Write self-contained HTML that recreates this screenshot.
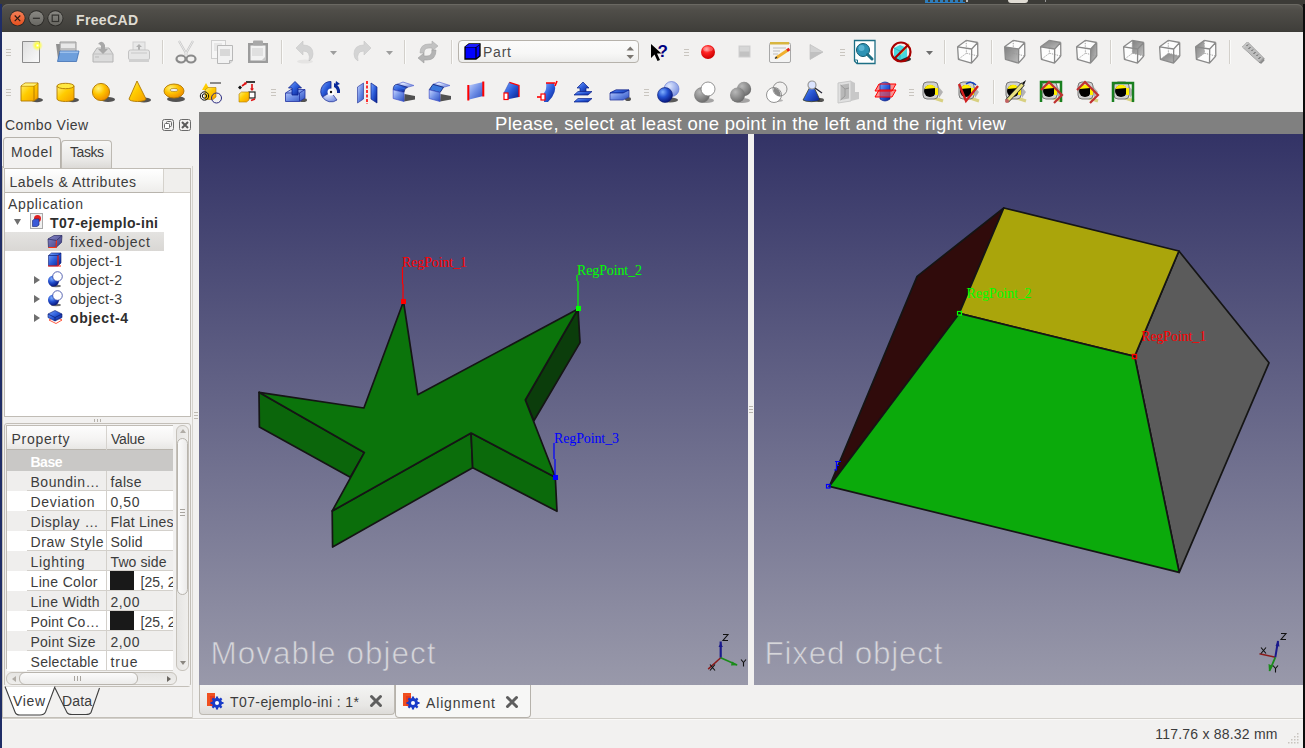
<!DOCTYPE html>
<html><head><meta charset="utf-8">
<style>
*{margin:0;padding:0;box-sizing:border-box}
html,body{width:1305px;height:748px;overflow:hidden;background:#f2f1f0;font-family:"Liberation Sans",sans-serif;position:relative}
.a{position:absolute}
svg.a{overflow:visible}
.t{position:absolute;white-space:nowrap;color:#3c3c3c}
</style></head><body>
<svg width="0" height="0" style="position:absolute"><defs>
<linearGradient id="gclose" x1="0" y1="0" x2="0" y2="1"><stop offset="0" stop-color="#f58058"/><stop offset="1" stop-color="#e5501e"/></linearGradient>
<linearGradient id="gmin" x1="0" y1="0" x2="0" y2="1"><stop offset="0" stop-color="#8a8984"/><stop offset="1" stop-color="#686762"/></linearGradient>
<linearGradient id="gyel" x1="0" y1="0" x2="1" y2="1"><stop offset="0" stop-color="#fff27a"/><stop offset="0.45" stop-color="#ffcc00"/><stop offset="1" stop-color="#f59c00"/></linearGradient>
<linearGradient id="gblu" x1="0" y1="0" x2="1" y2="1"><stop offset="0" stop-color="#c8d6ff"/><stop offset="0.5" stop-color="#6f8fe6"/><stop offset="1" stop-color="#2c4fc0"/></linearGradient>
<linearGradient id="gdblu" x1="0" y1="0" x2="1" y2="1"><stop offset="0" stop-color="#7aa6ff"/><stop offset="0.5" stop-color="#2a5ad8"/><stop offset="1" stop-color="#0a1f8a"/></linearGradient>
<radialGradient id="gsph" cx="35%" cy="30%" r="70%"><stop offset="0" stop-color="#fff27a"/><stop offset="0.5" stop-color="#ffc400"/><stop offset="1" stop-color="#f09000"/></radialGradient>
<radialGradient id="gbsph" cx="35%" cy="30%" r="70%"><stop offset="0" stop-color="#7fb0ff"/><stop offset="0.5" stop-color="#2350d0"/><stop offset="1" stop-color="#0a1a80"/></radialGradient>
<radialGradient id="gbsph2" cx="35%" cy="30%" r="70%"><stop offset="0" stop-color="#dfe8ff"/><stop offset="1" stop-color="#7d93e0"/></radialGradient>
<radialGradient id="ggsph" cx="35%" cy="30%" r="70%"><stop offset="0" stop-color="#b8b8b8"/><stop offset="1" stop-color="#6e6e6e"/></radialGradient>
<linearGradient id="ggray" x1="0" y1="0" x2="1" y2="1"><stop offset="0" stop-color="#f4f4f4"/><stop offset="1" stop-color="#c4c4c4"/></linearGradient>
<linearGradient id="gshade" x1="0" y1="0" x2="1" y2="1"><stop offset="0" stop-color="#808080"/><stop offset="1" stop-color="#bdbdbd"/></linearGradient>
<radialGradient id="gred" cx="40%" cy="30%" r="70%"><stop offset="0" stop-color="#ff8a8a"/><stop offset="0.4" stop-color="#f22"/><stop offset="1" stop-color="#c00"/></radialGradient>
</defs></svg>
<div class="a" style="left:0px;top:0px;width:1305px;height:10px;background:#3c3b37;"></div>
<div class="a" style="left:925px;top:0px;width:40px;height:2px;background:repeating-linear-gradient(90deg,#2f8fd6 0 3px,#3c3b37 3px 5px);opacity:0.8"></div>
<div class="a" style="left:925px;top:2px;width:40px;height:1px;background:#2a7fc8;"></div>
<div class="a" style="left:1008px;top:0px;width:20px;height:3px;background:#e0dcd4;border-radius:0 0 3px 3px"></div>
<div class="a" style="left:966px;top:0px;width:2px;height:2px;background:#bbb;"></div>
<div class="a" style="left:1045px;top:0px;width:1px;height:2px;background:#999;"></div>
<div class="a" style="left:0px;top:4px;width:2px;height:744px;background:#1f2d66;"></div>
<div class="a" style="left:1303px;top:4px;width:2px;height:744px;background:#0c0c0c;"></div>
<div class="a" style="left:2px;top:4px;width:1301px;height:28px;background:linear-gradient(#5c5a55 0px,#504e49 6px,#3f3e3a 27px,#3a3935 28px);border-radius:6px 6px 0 0;box-shadow:inset 0 1px 0 #6a6862"></div>
<svg class="a" style="left:8px;top:9px" width="20" height="20" viewBox="0 0 20 20"><g transform="translate(9.5,9.3)"><circle r="8" fill="#2b2a27"/><circle r="7.1" fill="url(#gclose)"/><path d="M-2.8,-2.8 L2.8,2.8 M2.8,-2.8 L-2.8,2.8" stroke="#2a1a14" stroke-width="1.1"/></g></svg>
<svg class="a" style="left:27px;top:9px" width="20" height="20" viewBox="0 0 20 20"><g transform="translate(9.399999999999999,9.3)"><circle r="8" fill="#2b2a27"/><circle r="7.1" fill="url(#gmin)"/><path d="M-3.5,0 H3.5" stroke="#33322f" stroke-width="1.3"/></g></svg>
<svg class="a" style="left:46px;top:9px" width="20" height="20" viewBox="0 0 20 20"><g transform="translate(9.400000000000006,9.3)"><circle r="8" fill="#2b2a27"/><circle r="7.1" fill="url(#gmin)"/><rect x="-3.2" y="-3.2" width="6.4" height="6.4" fill="none" stroke="#33322f" stroke-width="1.2"/></g></svg>
<div class="t" style="left:76.00px;top:12.65px;font-size:14px;line-height:14px;letter-spacing:0.349px;color:#dfdbd2;font-weight:bold;">FreeCAD</div>
<div class="a" style="left:6px;top:49px;width:5px;height:1px;background:#c9c5bf;"></div>
<div class="a" style="left:6px;top:52px;width:5px;height:1px;background:#c9c5bf;"></div>
<div class="a" style="left:6px;top:55px;width:5px;height:1px;background:#c9c5bf;"></div>
<div class="a" style="left:6px;top:89px;width:5px;height:1px;background:#c9c5bf;"></div>
<div class="a" style="left:6px;top:92px;width:5px;height:1px;background:#c9c5bf;"></div>
<div class="a" style="left:6px;top:95px;width:5px;height:1px;background:#c9c5bf;"></div>
<div class="a" style="left:162px;top:40px;width:1px;height:24px;background:#d3d0cb;"></div>
<div class="a" style="left:163px;top:40px;width:1px;height:24px;background:#fbfbfa;"></div>
<div class="a" style="left:281px;top:40px;width:1px;height:24px;background:#d3d0cb;"></div>
<div class="a" style="left:282px;top:40px;width:1px;height:24px;background:#fbfbfa;"></div>
<div class="a" style="left:404px;top:40px;width:1px;height:24px;background:#d3d0cb;"></div>
<div class="a" style="left:405px;top:40px;width:1px;height:24px;background:#fbfbfa;"></div>
<div class="a" style="left:451px;top:40px;width:1px;height:24px;background:#d3d0cb;"></div>
<div class="a" style="left:452px;top:40px;width:1px;height:24px;background:#fbfbfa;"></div>
<div class="a" style="left:944px;top:40px;width:1px;height:24px;background:#d3d0cb;"></div>
<div class="a" style="left:945px;top:40px;width:1px;height:24px;background:#fbfbfa;"></div>
<div class="a" style="left:991px;top:40px;width:1px;height:24px;background:#d3d0cb;"></div>
<div class="a" style="left:992px;top:40px;width:1px;height:24px;background:#fbfbfa;"></div>
<div class="a" style="left:1110px;top:40px;width:1px;height:24px;background:#d3d0cb;"></div>
<div class="a" style="left:1111px;top:40px;width:1px;height:24px;background:#fbfbfa;"></div>
<div class="a" style="left:1229px;top:40px;width:1px;height:24px;background:#d3d0cb;"></div>
<div class="a" style="left:1230px;top:40px;width:1px;height:24px;background:#fbfbfa;"></div>
<div class="a" style="left:993px;top:80px;width:1px;height:24px;background:#d3d0cb;"></div>
<div class="a" style="left:994px;top:80px;width:1px;height:24px;background:#fbfbfa;"></div>
<div class="a" style="left:271px;top:89px;width:5px;height:1px;background:#c9c5bf;"></div>
<div class="a" style="left:271px;top:92px;width:5px;height:1px;background:#c9c5bf;"></div>
<div class="a" style="left:271px;top:95px;width:5px;height:1px;background:#c9c5bf;"></div>
<div class="a" style="left:644px;top:89px;width:5px;height:1px;background:#c9c5bf;"></div>
<div class="a" style="left:644px;top:92px;width:5px;height:1px;background:#c9c5bf;"></div>
<div class="a" style="left:644px;top:95px;width:5px;height:1px;background:#c9c5bf;"></div>
<div class="a" style="left:909px;top:89px;width:5px;height:1px;background:#c9c5bf;"></div>
<div class="a" style="left:909px;top:92px;width:5px;height:1px;background:#c9c5bf;"></div>
<div class="a" style="left:909px;top:95px;width:5px;height:1px;background:#c9c5bf;"></div>
<div class="a" style="left:684px;top:49px;width:5px;height:1px;background:#c9c5bf;"></div>
<div class="a" style="left:684px;top:52px;width:5px;height:1px;background:#c9c5bf;"></div>
<div class="a" style="left:684px;top:55px;width:5px;height:1px;background:#c9c5bf;"></div>
<div class="a" style="left:840px;top:49px;width:5px;height:1px;background:#c9c5bf;"></div>
<div class="a" style="left:840px;top:52px;width:5px;height:1px;background:#c9c5bf;"></div>
<div class="a" style="left:840px;top:55px;width:5px;height:1px;background:#c9c5bf;"></div>
<svg class="a" style="left:19px;top:40px" width="24" height="24" viewBox="0 0 24 24"><defs><linearGradient id="gnew" x1="0" y1="0" x2="1" y2="1"><stop offset="0" stop-color="#dedede"/><stop offset="1" stop-color="#fbfbfb"/></linearGradient><radialGradient id="gglow"><stop offset="0" stop-color="#fff"/><stop offset="0.35" stop-color="#ffff40"/><stop offset="1" stop-color="#ffff40" stop-opacity="0"/></radialGradient></defs><path d="M3.5,1.5 H20.5 V22.5 H3.5 Z" fill="url(#gnew)" stroke="#8c8c8c" stroke-width="1"/><circle cx="18.5" cy="5.5" r="5.5" fill="url(#gglow)"/></svg>
<svg class="a" style="left:55px;top:40px" width="24" height="24" viewBox="0 0 24 24"><path d="M1,4 H6 L7,2 H11 V19 H3 Z" fill="#909090"/><path d="M5,2 H21 V17 H5 Z" fill="#d0d0d0" stroke="#9a9a9a" stroke-width="1"/><path d="M6,4 H20 V8 H6Z" fill="#e8e8e8"/><path d="M6,9 H20" stroke="#b0b0b0"/><path d="M5,11 H24 L21.5,21.5 H2.5 Z" fill="#6e9fdc" stroke="#3f6fb3" stroke-width="0.8"/><path d="M5,11.5 H23.5 L23,13 H4.7Z" fill="#9cc0ec"/></svg>
<svg class="a" style="left:91px;top:40px" width="24" height="24" viewBox="0 0 24 24"><path d="M2,14 L6,8 H18 L22,14 V22 H2 Z" fill="#dcdcdc" stroke="#b4b4b4"/><path d="M2,14 H22" stroke="#c0c0c0"/><path d="M4,17 H8" stroke="#bbb"/><path d="M7,4 Q11,-1 14,5 V9 H17 L12,14 L7,9 H10 V6 Q9,4 7,4Z" fill="#a8a8a8"/></svg>
<svg class="a" style="left:127px;top:40px" width="24" height="24" viewBox="0 0 24 24"><rect x="6" y="2" width="12" height="10" fill="#e8e8e8" stroke="#cfcfcf"/><path d="M12,4 L15,7 H13 V10 H11 V7 H9 Z" fill="#b0b0b0"/><rect x="1.5" y="10" width="21" height="10" rx="2" fill="#e6e6e6" stroke="#c3c3c3"/><path d="M4,13 H20" stroke="#c8c8c8"/><rect x="2" y="19" width="20" height="3" fill="#d0d0d0"/></svg>
<svg class="a" style="left:174px;top:40px" width="24" height="24" viewBox="0 0 24 24"><path d="M5,1 L13,15 M19,1 L11,15" stroke="#c4c4c4" stroke-width="2.2" fill="none"/><path d="M5,1 L13,15 M19,1 L11,15" stroke="#f4f4f4" stroke-width="0.8" fill="none"/><ellipse cx="7" cy="19" rx="4.5" ry="3.5" fill="none" stroke="#8a8a8a" stroke-width="2.2"/><ellipse cx="17" cy="19" rx="4.5" ry="3.5" fill="none" stroke="#8a8a8a" stroke-width="2.2"/></svg>
<svg class="a" style="left:210px;top:40px" width="24" height="24" viewBox="0 0 24 24"><rect x="1.5" y="0.5" width="14" height="18" fill="#f6f6f6" stroke="#cfcfcf"/><path d="M4,4 H12 M4,6 H12 M4,8 H12 M4,10 H12" stroke="#d8d8d8"/><path d="M7.5,5.5 H22.5 V21 L19.5,23.5 H7.5 Z" fill="#f2f2f2" stroke="#b8b8b8"/><rect x="10" y="9" width="10" height="7" fill="#d8d8d8"/><path d="M19.5,23.5 V20.5 H22.5" fill="#ddd" stroke="#b8b8b8"/></svg>
<svg class="a" style="left:246px;top:40px" width="24" height="24" viewBox="0 0 24 24"><rect x="2" y="3" width="20" height="20" fill="#9c9c9c"/><rect x="4.5" y="5.5" width="15" height="15" fill="#f2f2f2"/><rect x="7" y="0.5" width="10" height="5" rx="1" fill="#a8a8a8"/><rect x="6" y="8" width="11" height="8" fill="#e0e0e0"/><path d="M15,21 L19.5,16.5 V20.5 Z" fill="#c8c8c8"/></svg>
<svg class="a" style="left:293px;top:40px" width="24" height="24" viewBox="0 0 24 24"><path d="M3,8 L10,1 V5 Q20,5 20,14 Q20,19 16,21 Q18,11 10,11 V15 Z" fill="#d4d4d4" stroke="#c8c8c8" stroke-width="0.6"/><ellipse cx="12" cy="21.5" rx="8" ry="2" fill="#000" opacity="0.05"/></svg>
<svg class="a" style="left:326px;top:40px" width="16" height="24" viewBox="0 0 16 24"><path d="M4,11 H11 L7.5,15 Z" fill="#9d9d9d"/></svg>
<svg class="a" style="left:350px;top:40px" width="24" height="24" viewBox="0 0 24 24"><path d="M21,8 L14,1 V5 Q4,5 4,14 Q4,19 8,21 Q6,11 14,11 V15 Z" fill="#d4d4d4" stroke="#c8c8c8" stroke-width="0.6"/></svg>
<svg class="a" style="left:382px;top:40px" width="16" height="24" viewBox="0 0 16 24"><path d="M4,11 H11 L7.5,15 Z" fill="#9d9d9d"/></svg>
<svg class="a" style="left:416px;top:40px" width="24" height="24" viewBox="0 0 24 24"><path d="M4,13 Q4,4 13,4 H16 V1 L22,6 L16,11 V8 H13 Q8,8 8,13 Z" fill="#c2c2c2" stroke="#adadad" stroke-width="0.6"/><path d="M20,10 Q20,20 11,20 H8 V23 L2,18 L8,13 V16 H11 Q16,16 16,10 Z" fill="#b4b4b4" stroke="#a0a0a0" stroke-width="0.6"/></svg>
<div class="a" style="left:458px;top:40px;width:181px;height:23px;background:linear-gradient(#fbfbfb,#f7f7f6 60%,#ececeb);border:1px solid #b6b2ab;border-radius:4px"></div>
<svg class="a" style="left:463px;top:42px" width="20" height="20" viewBox="0 0 20 20"><path d="M2,5 L6,2 H17 V14 L13,17 H2 Z" fill="#0000ff" stroke="#000" stroke-width="1.3"/><path d="M2,5 H13 V17 M13,5 L17,2" fill="none" stroke="#000" stroke-width="1.1"/><path d="M2,5 L6,2 H17 L13,5 Z" fill="#1b1bff"/></svg>
<div class="t" style="left:483.00px;top:45.15px;font-size:14px;line-height:14px;letter-spacing:0.774px;color:#4c4c4c;">Part</div>
<svg class="a" style="left:625px;top:45px" width="12" height="16" viewBox="0 0 12 16"><path d="M1.5,5.5 H9 L5.25,1.5 Z M1.5,10 H9 L5.25,14 Z" fill="#7a7670"/></svg>
<svg class="a" style="left:648px;top:40px" width="24" height="24" viewBox="0 0 24 24"><path d="M3,4 L3,18 L6.5,14.5 L9.5,21 L12,20 L9,13.5 L13.5,13.5 Z" fill="#000"/><text x="9.5" y="17" font-family="Liberation Sans" font-weight="bold" font-size="17" fill="#000080">?</text></svg>
<svg class="a" style="left:696px;top:40px" width="24" height="24" viewBox="0 0 24 24"><circle cx="12" cy="12" r="7" fill="url(#gred)"/><ellipse cx="12" cy="9" rx="5" ry="2.5" fill="#fff" opacity="0.25"/></svg>
<svg class="a" style="left:732px;top:40px" width="24" height="24" viewBox="0 0 24 24"><rect x="7" y="6" width="11" height="11" fill="#c2c2c2" stroke="#d0d0d0"/><rect x="7.5" y="6.5" width="10" height="5" fill="#d6d6d6"/></svg>
<svg class="a" style="left:768px;top:40px" width="24" height="24" viewBox="0 0 24 24"><rect x="1.5" y="3" width="21" height="19.5" rx="1.5" fill="#f4f4f4" stroke="#a8a8a8"/><rect x="2" y="2" width="19" height="2.5" fill="#d8b640"/><path d="M5,8 H18 M5,11 H12 M5,14 H10" stroke="#bcbcbc"/><path d="M8,18 L20,10" stroke="#f0b030" stroke-width="3"/><path d="M19,10.5 L21.5,9" stroke="#e02020" stroke-width="3"/><path d="M7,18.5 L9,17" stroke="#333" stroke-width="1.5"/></svg>
<svg class="a" style="left:804px;top:40px" width="24" height="24" viewBox="0 0 24 24"><path d="M6,4.5 L19,12 L6,19.5 Z" fill="#d2d2d2" stroke="#b8b8b8" stroke-width="0.6"/><path d="M6,12 L19,12 L6,19.5 Z" fill="#c0c0c0"/></svg>
<svg class="a" style="left:853px;top:40px" width="24" height="24" viewBox="0 0 24 24"><path d="M1.5,0.5 H22 V23.5 H4 L1.5,21 Z" fill="#fff" stroke="#1d6f85" stroke-width="1.3"/><path d="M2,20 L4.5,20 L4.5,23" fill="none" stroke="#1d6f85"/><circle cx="10" cy="10" r="6.5" fill="#2d92b4" stroke="#135a70"/><circle cx="8.5" cy="8" r="3" fill="#6fc3e0" opacity="0.7"/><path d="M14.5,14.5 L19,19" stroke="#1d6f85" stroke-width="3" stroke-linecap="round"/></svg>
<svg class="a" style="left:889px;top:40px" width="24" height="24" viewBox="0 0 24 24"><ellipse cx="14" cy="19" rx="8" ry="3" fill="#2a2a2a"/><path d="M5,8 L11,5 L18,8 V17 L11,20 L5,17 Z" fill="#48d8e0"/><path d="M5,8 L11,11 L18,8 M11,11 V20" stroke="#2aa8b0" fill="none" stroke-width="0.8"/><path d="M11,14 L20,4" stroke="#f0e040" stroke-width="2"/><circle cx="12" cy="12" r="9.5" fill="none" stroke="#a80000" stroke-width="2.2"/><path d="M5.5,18.5 L18.5,5.5" stroke="#a80000" stroke-width="2.2"/></svg>
<svg class="a" style="left:922px;top:40px" width="16" height="24" viewBox="0 0 16 24"><path d="M4,11 H11 L7.5,15 Z" fill="#6d6d6d"/></svg>
<svg class="a" style="left:956px;top:40px" width="24" height="24" viewBox="0 0 24 24"><path d="M1.6,6.8 L10.2,0.4 L21.7,2.5 L21.8,16 L15.5,23.1 L2.4,19.3Z" fill="#fdfdfd"/><path d="M10.2,0.4 L10.4,13.2 M10.4,13.2 L21.8,16 M10.4,13.2 L2.4,19.3" stroke="#9a9a9a" stroke-width="0.9" stroke-dasharray="1.4,1.1" fill="none"/><path d="M1.6,6.8 L15.7,9 L15.5,23.1 L2.4,19.3Z M1.6,6.8 L10.2,0.4 M10.2,0.4 L21.7,2.5 M21.7,2.5 L15.7,9 M21.7,2.5 L21.8,16 M21.8,16 L15.5,23.1" stroke="#8a8a8a" stroke-width="1.3" fill="none" stroke-linejoin="round"/></svg>
<svg class="a" style="left:1003px;top:40px" width="24" height="24" viewBox="0 0 24 24"><path d="M1.6,6.8 L10.2,0.4 L21.7,2.5 L21.8,16 L15.5,23.1 L2.4,19.3Z" fill="#fdfdfd"/><path d="M1.6,6.8 L15.7,9 L15.5,23.1 L2.4,19.3Z" fill="url(#gshade)"/><path d="M10.2,0.4 L10.4,13.2 M10.4,13.2 L21.8,16 M10.4,13.2 L2.4,19.3" stroke="#9a9a9a" stroke-width="0.9" stroke-dasharray="1.4,1.1" fill="none"/><path d="M1.6,6.8 L15.7,9 L15.5,23.1 L2.4,19.3Z M1.6,6.8 L10.2,0.4 M10.2,0.4 L21.7,2.5 M21.7,2.5 L15.7,9 M21.7,2.5 L21.8,16 M21.8,16 L15.5,23.1" stroke="#8a8a8a" stroke-width="1.3" fill="none" stroke-linejoin="round"/></svg>
<svg class="a" style="left:1039px;top:40px" width="24" height="24" viewBox="0 0 24 24"><path d="M1.6,6.8 L10.2,0.4 L21.7,2.5 L21.8,16 L15.5,23.1 L2.4,19.3Z" fill="#fdfdfd"/><path d="M1.6,6.8 L10.2,0.4 L21.7,2.5 L15.7,9Z" fill="url(#gshade)"/><path d="M10.2,0.4 L10.4,13.2 M10.4,13.2 L21.8,16 M10.4,13.2 L2.4,19.3" stroke="#9a9a9a" stroke-width="0.9" stroke-dasharray="1.4,1.1" fill="none"/><path d="M1.6,6.8 L15.7,9 L15.5,23.1 L2.4,19.3Z M1.6,6.8 L10.2,0.4 M10.2,0.4 L21.7,2.5 M21.7,2.5 L15.7,9 M21.7,2.5 L21.8,16 M21.8,16 L15.5,23.1" stroke="#8a8a8a" stroke-width="1.3" fill="none" stroke-linejoin="round"/></svg>
<svg class="a" style="left:1075px;top:40px" width="24" height="24" viewBox="0 0 24 24"><path d="M1.6,6.8 L10.2,0.4 L21.7,2.5 L21.8,16 L15.5,23.1 L2.4,19.3Z" fill="#fdfdfd"/><path d="M15.7,9 L21.7,2.5 L21.8,16 L15.5,23.1Z" fill="url(#gshade)"/><path d="M10.2,0.4 L10.4,13.2 M10.4,13.2 L21.8,16 M10.4,13.2 L2.4,19.3" stroke="#9a9a9a" stroke-width="0.9" stroke-dasharray="1.4,1.1" fill="none"/><path d="M1.6,6.8 L15.7,9 L15.5,23.1 L2.4,19.3Z M1.6,6.8 L10.2,0.4 M10.2,0.4 L21.7,2.5 M21.7,2.5 L15.7,9 M21.7,2.5 L21.8,16 M21.8,16 L15.5,23.1" stroke="#8a8a8a" stroke-width="1.3" fill="none" stroke-linejoin="round"/></svg>
<svg class="a" style="left:1122px;top:40px" width="24" height="24" viewBox="0 0 24 24"><path d="M1.6,6.8 L10.2,0.4 L21.7,2.5 L21.8,16 L15.5,23.1 L2.4,19.3Z" fill="#fdfdfd"/><path d="M10.2,0.4 L21.7,2.5 L21.8,16 L10.4,13.2Z" fill="url(#gshade)"/><path d="M10.2,0.4 L10.4,13.2 M10.4,13.2 L21.8,16 M10.4,13.2 L2.4,19.3" stroke="#9a9a9a" stroke-width="0.9" stroke-dasharray="1.4,1.1" fill="none"/><path d="M1.6,6.8 L15.7,9 L15.5,23.1 L2.4,19.3Z M1.6,6.8 L10.2,0.4 M10.2,0.4 L21.7,2.5 M21.7,2.5 L15.7,9 M21.7,2.5 L21.8,16 M21.8,16 L15.5,23.1" stroke="#8a8a8a" stroke-width="1.3" fill="none" stroke-linejoin="round"/></svg>
<svg class="a" style="left:1158px;top:40px" width="24" height="24" viewBox="0 0 24 24"><path d="M1.6,6.8 L10.2,0.4 L21.7,2.5 L21.8,16 L15.5,23.1 L2.4,19.3Z" fill="#fdfdfd"/><path d="M2.4,19.3 L10.4,13.2 L21.8,16 L15.5,23.1Z" fill="url(#gshade)"/><path d="M10.2,0.4 L10.4,13.2 M10.4,13.2 L21.8,16 M10.4,13.2 L2.4,19.3" stroke="#9a9a9a" stroke-width="0.9" stroke-dasharray="1.4,1.1" fill="none"/><path d="M1.6,6.8 L15.7,9 L15.5,23.1 L2.4,19.3Z M1.6,6.8 L10.2,0.4 M10.2,0.4 L21.7,2.5 M21.7,2.5 L15.7,9 M21.7,2.5 L21.8,16 M21.8,16 L15.5,23.1" stroke="#8a8a8a" stroke-width="1.3" fill="none" stroke-linejoin="round"/></svg>
<svg class="a" style="left:1194px;top:40px" width="24" height="24" viewBox="0 0 24 24"><path d="M1.6,6.8 L10.2,0.4 L21.7,2.5 L21.8,16 L15.5,23.1 L2.4,19.3Z" fill="#fdfdfd"/><path d="M1.6,6.8 L10.2,0.4 L10.4,13.2 L2.4,19.3Z" fill="url(#gshade)"/><path d="M10.2,0.4 L10.4,13.2 M10.4,13.2 L21.8,16 M10.4,13.2 L2.4,19.3" stroke="#9a9a9a" stroke-width="0.9" stroke-dasharray="1.4,1.1" fill="none"/><path d="M1.6,6.8 L15.7,9 L15.5,23.1 L2.4,19.3Z M1.6,6.8 L10.2,0.4 M10.2,0.4 L21.7,2.5 M21.7,2.5 L15.7,9 M21.7,2.5 L21.8,16 M21.8,16 L15.5,23.1" stroke="#8a8a8a" stroke-width="1.3" fill="none" stroke-linejoin="round"/></svg>
<svg class="a" style="left:1241px;top:40px" width="24" height="24" viewBox="0 0 24 24"><path d="M1.5,7 L6.5,2 L23,18.5 L19,23 Z" fill="#a6a6a6" stroke="#7a7a7a" stroke-width="0.8"/><path d="M1.5,7 L6.5,2 L8,3.5 L3,8.5Z" fill="#c8c8c8"/><path d="M3,8.5 L8,3.5 L22,17.5 L18,22Z" fill="#bdbdbd"/><path d="M7,4.5 L5.5,6 M9.5,7 L7.5,9 M12,9.5 L10.5,11 M14.5,12 L12.5,14 M17,14.5 L15.5,16 M19.5,17 L17.5,19" stroke="#555" stroke-width="1"/><path d="M19,23 L23,18.5 L23.5,20.5 L20,24Z" fill="#8a8a8a"/></svg>
<svg class="a" style="left:19px;top:80px" width="24" height="24" viewBox="0 0 24 24"><ellipse cx="18" cy="20" rx="6" ry="2.2" fill="#2a2a2a" opacity="0.8"/><path d="M2,6 L6,3 H19 V18 L15,21 H2 Z" fill="url(#gyel)" stroke="#b07800" stroke-width="0.9"/><path d="M2,6 H15 V21 M15,6 L19,3" fill="none" stroke="#b07800" stroke-width="0.9"/><path d="M2.5,5.8 L6,3.5 H18.5 L15,5.8Z" fill="#fff27a"/></svg>
<svg class="a" style="left:55px;top:80px" width="24" height="24" viewBox="0 0 24 24"><ellipse cx="18" cy="20" rx="6" ry="2.2" fill="#2a2a2a" opacity="0.8"/><path d="M2,6 V19 A8.5,2.5 0 0 0 19,19 V6" fill="url(#gyel)" stroke="#b07800" stroke-width="0.9"/><ellipse cx="10.5" cy="6" rx="8.5" ry="2.7" fill="#ffe840" stroke="#b07800" stroke-width="0.9"/></svg>
<svg class="a" style="left:91px;top:80px" width="24" height="24" viewBox="0 0 24 24"><ellipse cx="17" cy="19.5" rx="7" ry="2.5" fill="#2a2a2a" opacity="0.8"/><circle cx="10" cy="12" r="8.6" fill="url(#gsph)" stroke="#b07800" stroke-width="0.9"/></svg>
<svg class="a" style="left:127px;top:80px" width="24" height="24" viewBox="0 0 24 24"><ellipse cx="17" cy="20" rx="7" ry="2.5" fill="#2a2a2a" opacity="0.8"/><path d="M10,1 L2,19 A8.5,2.5 0 0 0 19,19 Z" fill="url(#gyel)" stroke="#b07800" stroke-width="0.9"/></svg>
<svg class="a" style="left:163px;top:80px" width="24" height="24" viewBox="0 0 24 24"><ellipse cx="13" cy="19" rx="9" ry="3" fill="#2a2a2a" opacity="0.8"/><ellipse cx="11" cy="11" rx="10" ry="7" fill="url(#gsph)" stroke="#b07800" stroke-width="0.9"/><ellipse cx="11" cy="10" rx="4" ry="1.6" fill="#f0f0f0" stroke="#a07000" stroke-width="0.6"/></svg>
<svg class="a" style="left:199px;top:80px" width="24" height="24" viewBox="0 0 24 24"><path d="M7,3 L3,10 H11 Z" fill="#ffcc00"/><path d="M11,3 H22" stroke="#222" stroke-width="1"/><path d="M6,10 L9,7.5 H17 V17 L14,19.5 H6 Z" fill="url(#gyel)" stroke="#b07800" stroke-width="0.6"/><circle cx="5.5" cy="16" r="4.2" fill="none" stroke="#111" stroke-width="1"/><circle cx="5.5" cy="16" r="2.2" fill="none" stroke="#111" stroke-width="1"/><circle cx="17.5" cy="18" r="5" fill="none" stroke="#2a2a80" stroke-width="1"/></svg>
<svg class="a" style="left:235px;top:80px" width="24" height="24" viewBox="0 0 24 24"><path d="M11,2 H20" stroke="#111" stroke-width="1.6"/><path d="M7,6 L11,3" stroke="#e01010" stroke-width="1.6"/><path d="M9,2.5 L12,2.5 L11,5 Z" fill="#e01010"/><path d="M3,7.5 L5,5.5 L7,7.5 L5,9.5Z" fill="#111"/><path d="M17,4 V9" stroke="#e01010" stroke-width="1.6"/><path d="M15,8.5 H19 L17,11Z" fill="#e01010"/><rect x="14" y="12" width="6" height="6" fill="#fff" stroke="#222" stroke-width="1.2"/><path d="M4,14 L6.5,12 H14 V20 L11.5,22 H4 Z" fill="url(#gyel)" stroke="#b07800" stroke-width="0.6"/><path d="M16,20.5 L20,19" stroke="#e01010" stroke-width="1.6"/></svg>
<svg class="a" style="left:284px;top:80px" width="24" height="24" viewBox="0 0 24 24"><ellipse cx="19" cy="20" rx="4" ry="2" fill="#2a2a2a" opacity="0.8"/><path d="M1.5,13 L7,9.5 H21 V18 L15.5,21.5 H1.5 Z" fill="url(#gblu)" stroke="#2030a0" stroke-width="0.8"/><path d="M1.5,13 H15.5 V21.5 M15.5,13 L21,9.5" fill="none" stroke="#2030a0" stroke-width="0.8"/><path d="M8,15 V8 H4.5 L11,1.5 L17.5,8 H14 V15 Z" fill="url(#gdblu)" stroke="#0a1f8a" stroke-width="0.8"/></svg>
<svg class="a" style="left:320px;top:80px" width="24" height="24" viewBox="0 0 24 24"><path d="M11,12 L11,1.5 A10,10 0 0 0 2.5,17 Z" fill="url(#gdblu)" stroke="#0a1f8a" stroke-width="0.8"/><path d="M11,12 L2.5,17 A10,10 0 0 0 17,20 Z" fill="url(#gbsph2)" stroke="#3040a0" stroke-width="0.8"/><path d="M14,3 A9,9 0 0 1 20,13 L17,13 A6,6 0 0 0 14,7Z" fill="#0a2a9a"/><path d="M16,1 L20,4 L15,6Z" fill="#0a2a9a"/><circle cx="11" cy="12" r="3.5" fill="#fff"/><circle cx="11" cy="12" r="1.2" fill="#111"/></svg>
<svg class="a" style="left:356px;top:80px" width="24" height="24" viewBox="0 0 24 24"><path d="M1.5,7 L7.5,3 V19 L1.5,23 Z" fill="url(#gblu)" stroke="#3040a0" stroke-width="0.7"/><path d="M15,3 L21,7 V23 L15,19 Z" fill="url(#gdblu)" stroke="#0a1f8a" stroke-width="0.7"/><path d="M11,1 V24" stroke="#ff0000" stroke-width="1.6" stroke-dasharray="3,1.5"/></svg>
<svg class="a" style="left:392px;top:80px" width="24" height="24" viewBox="0 0 24 24"><path d="M12.5,14 L23,16 V19.5 L12,21.5Z" fill="#505050"/><path d="M5,4.3 L11,2 L22,5.5 L15.5,7.3Z" fill="url(#gbsph2)" stroke="#5060d0" stroke-width="0.6"/><path d="M1.2,9.8 Q1.2,4.6 5,4.3 L15.5,7.3 Q12,8.5 12,12.5Z" fill="url(#gdblu)" stroke="#0a1a70" stroke-width="0.7"/><path d="M2,8 Q4,6 13,9" stroke="#3a70e0" stroke-width="0.8" fill="none"/><path d="M1.2,9.8 L12,12.5 V21.5 L1.2,18.5Z" fill="url(#gblu)" stroke="#4050c8" stroke-width="0.7"/></svg>
<svg class="a" style="left:428px;top:80px" width="24" height="24" viewBox="0 0 24 24"><path d="M12.5,14 L23,16 V19.5 L12,21.5Z" fill="#505050"/><path d="M5,4.3 L11,2 L22,5.5 L15.5,7.3Z" fill="url(#gbsph2)" stroke="#5060d0" stroke-width="0.6"/><path d="M1.2,9.8 L5,4.3 L15.5,7.3 L12,12.5Z" fill="#3a78dc" stroke="#0a1a70" stroke-width="0.8"/><path d="M1.2,9.8 L12,12.5 V21.5 L1.2,18.5Z" fill="url(#gblu)" stroke="#4050c8" stroke-width="0.7"/></svg>
<svg class="a" style="left:464px;top:80px" width="24" height="24" viewBox="0 0 24 24"><path d="M4.3,5.6 L19.3,2 V16 L4.3,19.7 Z" fill="url(#gblu)"/><path d="M4.3,5 V20.5 M19.3,1.5 V16.5" stroke="#ff0000" stroke-width="2"/></svg>
<svg class="a" style="left:500px;top:80px" width="24" height="24" viewBox="0 0 24 24"><path d="M9.4,2.3 L19,5.5 V17 L7,19.5 L4,13 Z" fill="url(#gdblu)"/><path d="M9.4,2.3 L19,5.5 V17" fill="none" stroke="#ff0000" stroke-width="1.3"/><path d="M9.4,2.3 L4,13" stroke="#3050c0" stroke-width="0.6"/><rect x="4" y="13" width="4" height="6.5" fill="#fff" stroke="#ff0000" stroke-width="1.2"/></svg>
<svg class="a" style="left:536px;top:80px" width="24" height="24" viewBox="0 0 24 24"><path d="M10,3 H18 Q22,12 12,22 H8 V13 Q11,10 10,3Z" fill="url(#gdblu)"/><path d="M10,3 H19 M19,6 L21,1" stroke="#ff0000" stroke-width="1.6"/><rect x="5" y="14" width="4" height="6" fill="#fff" stroke="#ff0000" stroke-width="1.2"/><path d="M1,17 H5" stroke="#ff0000" stroke-width="1.6"/></svg>
<svg class="a" style="left:572px;top:80px" width="24" height="24" viewBox="0 0 24 24"><path d="M8,12 V8 H5 L11,2 L17,8 H14 V12 Z" fill="url(#gdblu)" stroke="#0a1f8a" stroke-width="0.7"/><path d="M2,15 L6,11.5 H20 L16,15 Z" fill="url(#gdblu)" stroke="#0a1f8a" stroke-width="0.7"/><path d="M2,22 L6,18.5 H20 L16,22 Z" fill="url(#gdblu)" stroke="#0a1f8a" stroke-width="0.7"/></svg>
<svg class="a" style="left:608px;top:80px" width="24" height="24" viewBox="0 0 24 24"><ellipse cx="20" cy="19" rx="3" ry="2" fill="#2a2a2a" opacity="0.8"/><path d="M2,13 L8,10 H21 V17 L15,20 H2 Z" fill="url(#gblu)" stroke="#3040a0" stroke-width="0.8"/><path d="M2,13 L8,10 H21 L15,13Z" fill="url(#gdblu)" stroke="#0a1f8a" stroke-width="0.7"/></svg>
<svg class="a" style="left:657px;top:80px" width="24" height="24" viewBox="0 0 24 24"><ellipse cx="13" cy="20" rx="8" ry="2.5" fill="#333" opacity="0.8"/><circle cx="14.5" cy="9" r="7.5" fill="url(#gbsph2)" stroke="#5a70d0" stroke-width="0.6"/><circle cx="8" cy="15" r="7.5" fill="url(#gbsph)" stroke="#0a1a70" stroke-width="0.6"/></svg>
<svg class="a" style="left:693px;top:80px" width="24" height="24" viewBox="0 0 24 24"><ellipse cx="13" cy="20.5" rx="8" ry="2.5" fill="#555" opacity="0.5"/><circle cx="9" cy="15" r="7.5" fill="url(#ggsph)" stroke="#777" stroke-width="0.6"/><circle cx="15" cy="9" r="7" fill="#fff" stroke="#7a7a7a" stroke-width="0.8"/></svg>
<svg class="a" style="left:729px;top:80px" width="24" height="24" viewBox="0 0 24 24"><ellipse cx="13" cy="20.5" rx="8" ry="2.5" fill="#555" opacity="0.5"/><circle cx="15" cy="9" r="7.2" fill="url(#ggsph)"/><circle cx="8.5" cy="15" r="7.5" fill="url(#ggsph)"/></svg>
<svg class="a" style="left:765px;top:80px" width="24" height="24" viewBox="0 0 24 24"><ellipse cx="12" cy="20.5" rx="6" ry="1.5" fill="#777" opacity="0.5"/><circle cx="9" cy="15" r="7.5" fill="#fff" stroke="#7a7a7a" stroke-width="0.8"/><circle cx="15" cy="9" r="7" fill="none" stroke="#7a7a7a" stroke-width="0.8"/><path d="M9,7.5 A7.5,7.5 0 0 1 15.5,16.5 A7,7 0 0 1 9,7.5Z" fill="#888"/></svg>
<svg class="a" style="left:801px;top:80px" width="24" height="24" viewBox="0 0 24 24"><ellipse cx="19" cy="20" rx="4" ry="2" fill="#2a2a2a" opacity="0.8"/><path d="M11,3 L2,20 A9,2.5 0 0 0 19,20 Z" fill="url(#gdblu)" stroke="#3a3a10" stroke-width="0.7"/><circle cx="11" cy="5" r="4" fill="#dbe4ff" stroke="#999" stroke-width="1.2"/><path d="M14,8 L21,13" stroke="#223" stroke-width="1.2"/></svg>
<svg class="a" style="left:837px;top:80px" width="24" height="24" viewBox="0 0 24 24"><path d="M1,3 L14,1 V21 L1,23 Z" fill="#e0e0e0" stroke="#c8c8c8"/><path d="M3.5,5 L12,3.5 V18.5 L3.5,20Z" fill="#b8b8b8"/><path d="M14,1 L18,3 V12 H22 V19 L14,21" fill="#c8c8c8"/><path d="M3.5,5 L8,9 V16 L3.5,20 M8,9 L12,8" stroke="#9a9a9a" fill="none"/></svg>
<svg class="a" style="left:873px;top:80px" width="24" height="24" viewBox="0 0 24 24"><path d="M2,11 L19,11 L23,4 H6 Z" fill="#ff6060" opacity="0.7"/><path d="M7,4 Q12,0 17,4 V19 Q12,23 7,19 Z" fill="url(#gdblu)" stroke="#0a1f8a" stroke-width="0.7"/><path d="M2,17 L19,17 L23,10 H6 Z" fill="#ff5050" opacity="0.6"/><path d="M2,11 L19,11 L23,4 H6 Z M2,17 L19,17 L23,10 H6 Z" fill="none" stroke="#ff0000" stroke-width="1"/></svg>
<svg class="a" style="left:921px;top:80px" width="24" height="24" viewBox="0 0 24 24"><path d="M13,18 L22,21" stroke="#d8d080" stroke-width="3"/><path d="M16,5 L22,12 L18,18" fill="#888" opacity="0.6"/><rect x="2" y="2" width="15" height="17" rx="4" fill="#d0d0d0" stroke="#777" stroke-width="1"/><circle cx="9" cy="11" r="6" fill="#000"/><path d="M3.5,9 A6,6 0 0 1 14.5,8 Z" fill="#ffee00"/><rect x="14" y="8" width="3" height="7" fill="#ffee00"/></svg>
<svg class="a" style="left:957px;top:80px" width="24" height="24" viewBox="0 0 24 24"><path d="M13,18 L22,21" stroke="#d8d080" stroke-width="3"/><path d="M16,5 L22,12 L18,18" fill="#888" opacity="0.6"/><rect x="2" y="2" width="15" height="17" rx="4" fill="#d0d0d0" stroke="#777" stroke-width="1"/><circle cx="9" cy="11" r="6" fill="#000"/><path d="M3.5,9 A6,6 0 0 1 14.5,8 Z" fill="#ffee00"/><rect x="14" y="8" width="3" height="7" fill="#ffee00"/><path d="M2,4 L9,21 L21,6" fill="none" stroke="#d02020" stroke-width="2.4"/><path d="M9,4 Q14,0 19,5" fill="none" stroke="#1040c0" stroke-width="1.5"/></svg>
<svg class="a" style="left:1004px;top:80px" width="24" height="24" viewBox="0 0 24 24"><path d="M13,18 L22,21" stroke="#d8d080" stroke-width="3"/><path d="M16,5 L22,12 L18,18" fill="#888" opacity="0.6"/><rect x="2" y="2" width="15" height="17" rx="4" fill="#d0d0d0" stroke="#777" stroke-width="1"/><circle cx="9" cy="11" r="6" fill="#000"/><path d="M3.5,9 A6,6 0 0 1 14.5,8 Z" fill="#ffee00"/><rect x="14" y="8" width="3" height="7" fill="#ffee00"/><path d="M3,21 L19,4" stroke="#222" stroke-width="4.5"/><path d="M3.5,20.5 L18.5,4.5" stroke="#e8e080" stroke-width="3.2"/><circle cx="3" cy="21" r="2" fill="#c06060"/><path d="M18,3 L22,0 L20,5Z" fill="#111"/></svg>
<svg class="a" style="left:1040px;top:80px" width="24" height="24" viewBox="0 0 24 24"><path d="M13,18 L22,21" stroke="#d8d080" stroke-width="3"/><path d="M16,5 L22,12 L18,18" fill="#888" opacity="0.6"/><rect x="2" y="2" width="15" height="17" rx="4" fill="#d0d0d0" stroke="#777" stroke-width="1"/><circle cx="9" cy="11" r="6" fill="#000"/><path d="M3.5,9 A6,6 0 0 1 14.5,8 Z" fill="#ffee00"/><rect x="14" y="8" width="3" height="7" fill="#ffee00"/><path d="M1,22 V2 H21 V22" fill="none" stroke="#1a8020" stroke-width="2.5"/><path d="M1,10 L9,2 L22,15 L14,23" fill="none" stroke="#c03030" stroke-width="2.2"/></svg>
<svg class="a" style="left:1076px;top:80px" width="24" height="24" viewBox="0 0 24 24"><path d="M13,18 L22,21" stroke="#d8d080" stroke-width="3"/><path d="M16,5 L22,12 L18,18" fill="#888" opacity="0.6"/><rect x="2" y="2" width="15" height="17" rx="4" fill="#d0d0d0" stroke="#777" stroke-width="1"/><circle cx="9" cy="11" r="6" fill="#000"/><path d="M3.5,9 A6,6 0 0 1 14.5,8 Z" fill="#ffee00"/><rect x="14" y="8" width="3" height="7" fill="#ffee00"/><path d="M1,10 L9,2 L22,15 L14,23" fill="none" stroke="#c03030" stroke-width="2.2"/></svg>
<svg class="a" style="left:1112px;top:80px" width="24" height="24" viewBox="0 0 24 24"><path d="M13,18 L22,21" stroke="#d8d080" stroke-width="3"/><path d="M16,5 L22,12 L18,18" fill="#888" opacity="0.6"/><rect x="2" y="2" width="15" height="17" rx="4" fill="#d0d0d0" stroke="#777" stroke-width="1"/><circle cx="9" cy="11" r="6" fill="#000"/><path d="M3.5,9 A6,6 0 0 1 14.5,8 Z" fill="#ffee00"/><rect x="14" y="8" width="3" height="7" fill="#ffee00"/><path d="M1,22 V3 H21 V22" fill="none" stroke="#1a8020" stroke-width="2.5"/></svg>
<div class="a" style="left:2px;top:166px;width:1px;height:552px;background:#c3bfb8;"></div>
<div class="a" style="left:2px;top:717px;width:191px;height:1px;background:#c3bfb8;"></div>
<div class="a" style="left:192px;top:166px;width:1px;height:552px;background:#d6d3ce;"></div>
<div class="t" style="left:5.00px;top:118.15px;font-size:14px;line-height:14px;letter-spacing:0.432px;color:#3c3c3c;">Combo View</div>
<svg class="a" style="left:162px;top:119px" width="12" height="12" viewBox="0 0 12 12"><rect x="0.5" y="0.5" width="11" height="11" rx="2" fill="none" stroke="#6a6a6a"/><rect x="4.5" y="2.5" width="5" height="5" rx="1" fill="none" stroke="#6a6a6a"/><rect x="2.5" y="4.5" width="5" height="5" rx="1" fill="#fff" stroke="#6a6a6a"/></svg>
<svg class="a" style="left:179px;top:119px" width="12" height="12" viewBox="0 0 12 12"><rect x="0.5" y="0.5" width="11" height="11" rx="2" fill="none" stroke="#6a6a6a"/><path d="M3,3 L9,9 M9,3 L3,9" stroke="#5a5a5a" stroke-width="2"/></svg>
<div class="a" style="left:61px;top:140px;width:51px;height:28px;background:linear-gradient(#f7f7f6,#e9e8e6 70%,#dcdad7);border:1px solid #bdb9b2;border-bottom:none;border-radius:4px 4px 0 0"></div>
<div class="a" style="left:3px;top:137px;width:58px;height:31px;background:#f2f1f0;border:1px solid #b6b2ab;border-bottom:none;border-radius:4px 4px 0 0"></div>
<div class="t" style="left:11.00px;top:144.65px;font-size:14px;line-height:14px;letter-spacing:0.717px;color:#3c3c3c;">Model</div>
<div class="t" style="left:70.00px;top:145.15px;font-size:14px;line-height:14px;letter-spacing:-0.447px;color:#3c3c3c;">Tasks</div>
<div class="a" style="left:4px;top:168px;width:187px;height:249px;background:#fff;border:1px solid #c0bcb5"></div>
<div class="a" style="left:5px;top:169px;width:159px;height:24px;background:linear-gradient(#fff,#f7f7f6 50%,#eeedeb);border-right:1px solid #d5d2cc;border-bottom:1px solid #b8b4ad"></div>
<div class="a" style="left:164px;top:169px;width:26px;height:24px;background:#f0efed;border-bottom:1px solid #d0ccc6"></div>
<div class="t" style="left:9.50px;top:174.65px;font-size:14px;line-height:14px;letter-spacing:0.542px;color:#3c3c3c;">Labels &amp; Attributes</div>
<div class="t" style="left:8.00px;top:197.15px;font-size:14px;line-height:14px;letter-spacing:0.651px;color:#3c3c3c;">Application</div>
<div class="a" style="left:5px;top:232px;width:159px;height:19px;background:linear-gradient(#e4e3e1,#d9d7d4);"></div>
<svg class="a" style="left:13px;top:218px" width="10" height="8" viewBox="0 0 10 8"><path d="M1,1 H8 L4.5,7 Z" fill="#6f6f6f"/></svg>
<svg class="a" style="left:30px;top:213px" width="14" height="17" viewBox="0 0 14 17"><rect x="0.5" y="0.5" width="12" height="15" fill="#f0f0f0" stroke="#aaa"/><circle cx="7.5" cy="5.5" r="3.5" fill="#e02020"/><path d="M2.5,7.5 L4.5,6 H9 V12 L7,13.5 H2.5Z" fill="#3a5ad8" stroke="#102070" stroke-width="0.6"/></svg>
<div class="t" style="left:50.00px;top:215.65px;font-size:14px;line-height:14px;letter-spacing:0.380px;color:#2e2e2e;font-weight:bold;">T07-ejemplo-ini</div>
<svg class="a" style="left:47px;top:234px" width="16" height="15" viewBox="0 0 16 15"><defs><linearGradient id="gfx" x1="0" y1="0" x2="1" y2="1"><stop offset="0" stop-color="#8a8ac8"/><stop offset="1" stop-color="#3a3a80"/></linearGradient></defs><path d="M1,5 L7,1.5 H15 L14.5,8.5 L9,13.5 H1.5Z" fill="url(#gfx)" stroke="#262660" stroke-width="0.7"/><path d="M1,5 L9.5,6.5 L15,1.5 M9.5,6.5 L9,13.5" fill="none" stroke="#262660" stroke-width="0.7"/><path d="M9.5,6.5 L9,13.5 L1.5,13.5" fill="none" stroke="#ff3010" stroke-width="1.1"/></svg>
<div class="t" style="left:70.00px;top:234.65px;font-size:14px;line-height:14px;letter-spacing:0.764px;color:#3c3c3c;">fixed-object</div>
<svg class="a" style="left:47px;top:252px" width="16" height="16" viewBox="0 0 16 16"><path d="M1.5,3.5 L4.5,1 H14 V11 L11,14 H1.5Z" fill="url(#gdblu)" stroke="#0a1a70" stroke-width="0.6"/><path d="M1.5,3.5 H11 V14 M11,3.5 L14,1" fill="none" stroke="#0a1a70" stroke-width="0.7"/><path d="M11,3.5 V14.5 M1,14 H14" stroke="#ff2010" stroke-width="1.1"/></svg>
<div class="t" style="left:70.00px;top:253.65px;font-size:14px;line-height:14px;letter-spacing:0.313px;color:#3c3c3c;">object-1</div>
<svg class="a" style="left:33px;top:275px" width="8" height="10" viewBox="0 0 8 10"><path d="M1,1 V9 L7,5 Z" fill="#6f6f6f"/></svg>
<svg class="a" style="left:47px;top:271px" width="16" height="17" viewBox="0 0 16 17"><ellipse cx="9" cy="15" rx="5" ry="1.2" fill="#333" opacity="0.7"/><circle cx="6.5" cy="10" r="5.5" fill="url(#gbsph)"/><circle cx="10.5" cy="5.5" r="4.8" fill="#fff" stroke="#3040a0" stroke-width="0.8"/></svg>
<div class="t" style="left:70.00px;top:272.65px;font-size:14px;line-height:14px;letter-spacing:0.313px;color:#3c3c3c;">object-2</div>
<svg class="a" style="left:33px;top:294px" width="8" height="10" viewBox="0 0 8 10"><path d="M1,1 V9 L7,5 Z" fill="#6f6f6f"/></svg>
<svg class="a" style="left:47px;top:290px" width="16" height="17" viewBox="0 0 16 17"><ellipse cx="9" cy="15" rx="5" ry="1.2" fill="#333" opacity="0.7"/><circle cx="6.5" cy="10" r="5.5" fill="url(#gbsph)"/><circle cx="10.5" cy="5.5" r="4.8" fill="#fff" stroke="#3040a0" stroke-width="0.8"/></svg>
<div class="t" style="left:70.00px;top:291.65px;font-size:14px;line-height:14px;letter-spacing:0.313px;color:#3c3c3c;">object-3</div>
<svg class="a" style="left:33px;top:313px" width="8" height="10" viewBox="0 0 8 10"><path d="M1,1 V9 L7,5 Z" fill="#6f6f6f"/></svg>
<svg class="a" style="left:47px;top:309px" width="16" height="17" viewBox="0 0 16 17"><path d="M2,11 L9,14.5 L15,11 L8,7.5Z" fill="none" stroke="#ff3010" stroke-width="0.8"/><path d="M1,5 L8,1.5 L15,5 V8.5 L8,12 L1,8.5Z" fill="url(#gdblu)" stroke="#0a1a70" stroke-width="0.6"/><path d="M1,5 L8,8.5 L15,5 M8,8.5 V12" fill="none" stroke="#0a1a70" stroke-width="0.7"/></svg>
<div class="t" style="left:70.00px;top:310.65px;font-size:14px;line-height:14px;letter-spacing:0.617px;color:#2e2e2e;font-weight:bold;">object-4</div>
<div class="a" style="left:94px;top:419px;width:1px;height:3px;background:#b5b1aa;"></div>
<div class="a" style="left:97px;top:419px;width:1px;height:3px;background:#b5b1aa;"></div>
<div class="a" style="left:100px;top:419px;width:1px;height:3px;background:#b5b1aa;"></div>
<div class="a" style="left:4px;top:423px;width:187px;height:264px;background:#f2f1f0;border:1px solid #c3bfb8;border-radius:3px"></div>
<div class="a" style="left:6px;top:425px;width:167px;height:244px;background:#fff;border-left:1px solid #c0bcb5;border-top:1px solid #c0bcb5"></div>
<div class="a" style="left:7px;top:426px;width:166px;height:24px;background:linear-gradient(#fdfdfd,#f4f3f2 60%,#e8e7e5);border-bottom:1px solid #b9b5ae"></div>
<div class="a" style="left:106px;top:426px;width:1px;height:24px;background:#d6d3ce;"></div>
<div class="t" style="left:11.50px;top:432.15px;font-size:14px;line-height:14px;letter-spacing:0.727px;color:#3c3c3c;">Property</div>
<div class="t" style="left:111.00px;top:432.15px;font-size:14px;line-height:14px;letter-spacing:-0.192px;color:#3c3c3c;">Value</div>
<div class="a" style="left:7px;top:450px;width:166px;height:21px;background:#c9c8c6;"></div>
<div class="t" style="left:30.50px;top:455.15px;font-size:14px;line-height:14px;letter-spacing:-0.490px;color:#ffffff;font-weight:bold;">Base</div>
<div class="a" style="left:7px;top:471px;width:166px;height:20px;background:#efeeed;"></div>
<div class="a" style="left:27px;top:490px;width:146px;height:1px;background:#d3d0cb;"></div>
<div class="a" style="left:106px;top:471px;width:1px;height:20px;background:#d3d0cb;"></div>
<div class="t" style="left:30.50px;top:474.65px;font-size:14px;line-height:14px;letter-spacing:0.517px;color:#3c3c3c;">Boundin…</div>
<div class="a" style="left:107px;top:471px;width:66px;height:20px;overflow:hidden"><div class="t" style="left:3.50px;top:3.65px;font-size:14px;line-height:14px;letter-spacing:0.357px;color:#3c3c3c;">false</div>
</div>
<div class="a" style="left:7px;top:491px;width:166px;height:20px;background:#ffffff;"></div>
<div class="a" style="left:27px;top:510px;width:146px;height:1px;background:#d3d0cb;"></div>
<div class="a" style="left:106px;top:491px;width:1px;height:20px;background:#d3d0cb;"></div>
<div class="t" style="left:30.50px;top:494.65px;font-size:14px;line-height:14px;letter-spacing:0.704px;color:#3c3c3c;">Deviation</div>
<div class="a" style="left:107px;top:491px;width:66px;height:20px;overflow:hidden"><div class="t" style="left:3.50px;top:3.65px;font-size:14px;line-height:14px;letter-spacing:0.584px;color:#3c3c3c;">0,50</div>
</div>
<div class="a" style="left:7px;top:511px;width:166px;height:20px;background:#efeeed;"></div>
<div class="a" style="left:27px;top:530px;width:146px;height:1px;background:#d3d0cb;"></div>
<div class="a" style="left:106px;top:511px;width:1px;height:20px;background:#d3d0cb;"></div>
<div class="t" style="left:30.50px;top:514.65px;font-size:14px;line-height:14px;letter-spacing:0.526px;color:#3c3c3c;">Display …</div>
<div class="a" style="left:107px;top:511px;width:66px;height:20px;overflow:hidden"><div class="t" style="left:3.50px;top:3.65px;font-size:14px;line-height:14px;letter-spacing:0.256px;color:#3c3c3c;">Flat Lines</div>
</div>
<div class="a" style="left:7px;top:531px;width:166px;height:20px;background:#ffffff;"></div>
<div class="a" style="left:27px;top:550px;width:146px;height:1px;background:#d3d0cb;"></div>
<div class="a" style="left:106px;top:531px;width:1px;height:20px;background:#d3d0cb;"></div>
<div class="t" style="left:30.50px;top:534.65px;font-size:14px;line-height:14px;letter-spacing:0.591px;color:#3c3c3c;">Draw Style</div>
<div class="a" style="left:107px;top:531px;width:66px;height:20px;overflow:hidden"><div class="t" style="left:3.50px;top:3.65px;font-size:14px;line-height:14px;letter-spacing:0.217px;color:#3c3c3c;">Solid</div>
</div>
<div class="a" style="left:7px;top:551px;width:166px;height:20px;background:#efeeed;"></div>
<div class="a" style="left:27px;top:570px;width:146px;height:1px;background:#d3d0cb;"></div>
<div class="a" style="left:106px;top:551px;width:1px;height:20px;background:#d3d0cb;"></div>
<div class="t" style="left:30.50px;top:554.65px;font-size:14px;line-height:14px;letter-spacing:0.708px;color:#3c3c3c;">Lighting</div>
<div class="a" style="left:107px;top:551px;width:66px;height:20px;overflow:hidden"><div class="t" style="left:3.50px;top:3.65px;font-size:14px;line-height:14px;letter-spacing:0.107px;color:#3c3c3c;">Two side</div>
</div>
<div class="a" style="left:7px;top:571px;width:166px;height:20px;background:#ffffff;"></div>
<div class="a" style="left:27px;top:590px;width:146px;height:1px;background:#d3d0cb;"></div>
<div class="a" style="left:106px;top:571px;width:1px;height:20px;background:#d3d0cb;"></div>
<div class="t" style="left:30.50px;top:574.65px;font-size:14px;line-height:14px;letter-spacing:0.354px;color:#3c3c3c;">Line Color</div>
<div class="a" style="left:110px;top:571px;width:24px;height:19px;background:#191919;"></div>
<div class="a" style="left:107px;top:571px;width:66px;height:20px;overflow:hidden"><div class="t" style="left:33.50px;top:3.65px;font-size:14px;line-height:14px;letter-spacing:0.000px;color:#3c3c3c;">[25, 25, 25]</div>
</div>
<div class="a" style="left:7px;top:591px;width:166px;height:20px;background:#efeeed;"></div>
<div class="a" style="left:27px;top:610px;width:146px;height:1px;background:#d3d0cb;"></div>
<div class="a" style="left:106px;top:591px;width:1px;height:20px;background:#d3d0cb;"></div>
<div class="t" style="left:30.50px;top:594.65px;font-size:14px;line-height:14px;letter-spacing:0.317px;color:#3c3c3c;">Line Width</div>
<div class="a" style="left:107px;top:591px;width:66px;height:20px;overflow:hidden"><div class="t" style="left:3.50px;top:3.65px;font-size:14px;line-height:14px;letter-spacing:0.584px;color:#3c3c3c;">2,00</div>
</div>
<div class="a" style="left:7px;top:611px;width:166px;height:20px;background:#ffffff;"></div>
<div class="a" style="left:27px;top:630px;width:146px;height:1px;background:#d3d0cb;"></div>
<div class="a" style="left:106px;top:611px;width:1px;height:20px;background:#d3d0cb;"></div>
<div class="t" style="left:30.50px;top:614.65px;font-size:14px;line-height:14px;letter-spacing:0.163px;color:#3c3c3c;">Point Co…</div>
<div class="a" style="left:110px;top:611px;width:24px;height:19px;background:#191919;"></div>
<div class="a" style="left:107px;top:611px;width:66px;height:20px;overflow:hidden"><div class="t" style="left:33.50px;top:3.65px;font-size:14px;line-height:14px;letter-spacing:0.000px;color:#3c3c3c;">[25, 25, 25]</div>
</div>
<div class="a" style="left:7px;top:631px;width:166px;height:20px;background:#efeeed;"></div>
<div class="a" style="left:27px;top:650px;width:146px;height:1px;background:#d3d0cb;"></div>
<div class="a" style="left:106px;top:631px;width:1px;height:20px;background:#d3d0cb;"></div>
<div class="t" style="left:30.50px;top:634.65px;font-size:14px;line-height:14px;letter-spacing:0.218px;color:#3c3c3c;">Point Size</div>
<div class="a" style="left:107px;top:631px;width:66px;height:20px;overflow:hidden"><div class="t" style="left:3.50px;top:3.65px;font-size:14px;line-height:14px;letter-spacing:0.584px;color:#3c3c3c;">2,00</div>
</div>
<div class="a" style="left:7px;top:651px;width:166px;height:20px;background:#ffffff;"></div>
<div class="a" style="left:27px;top:670px;width:146px;height:1px;background:#d3d0cb;"></div>
<div class="a" style="left:106px;top:651px;width:1px;height:20px;background:#d3d0cb;"></div>
<div class="t" style="left:30.50px;top:654.65px;font-size:14px;line-height:14px;letter-spacing:0.291px;color:#3c3c3c;">Selectable</div>
<div class="a" style="left:107px;top:651px;width:66px;height:20px;overflow:hidden"><div class="t" style="left:3.50px;top:3.65px;font-size:14px;line-height:14px;letter-spacing:0.958px;color:#3c3c3c;">true</div>
</div>
<div class="a" style="left:176px;top:425px;width:13px;height:246px;background:linear-gradient(90deg,#e6e5e3,#efeeec);border:1px solid #c6c2bb;border-radius:6px"></div>
<div class="a" style="left:177px;top:438px;width:11px;height:157px;background:linear-gradient(90deg,#fbfbfb,#ecebea);border:1px solid #b8b4ad;border-radius:6px"></div>
<svg class="a" style="left:179px;top:428px" width="8" height="6" viewBox="0 0 8 6"><path d="M1,5 H7 L4,1Z" fill="#b0aca6"/></svg>
<svg class="a" style="left:179px;top:660px" width="8" height="6" viewBox="0 0 8 6"><path d="M1,1 H7 L4,5Z" fill="#8a8680"/></svg>
<div class="a" style="left:180px;top:509px;width:5px;height:1px;background:#a8a49e;"></div>
<div class="a" style="left:180px;top:512px;width:5px;height:1px;background:#a8a49e;"></div>
<div class="a" style="left:180px;top:515px;width:5px;height:1px;background:#a8a49e;"></div>
<div class="a" style="left:6px;top:672px;width:171px;height:13px;background:linear-gradient(#e6e5e3,#efeeec);border:1px solid #c6c2bb;border-radius:6px"></div>
<div class="a" style="left:19px;top:672px;width:119px;height:13px;background:linear-gradient(#fbfbfb,#ecebea);border:1px solid #b8b4ad;border-radius:6px"></div>
<svg class="a" style="left:11px;top:675px" width="6" height="8" viewBox="0 0 6 8"><path d="M5,1 V7 L1,4Z" fill="#b0aca6"/></svg>
<svg class="a" style="left:166px;top:675px" width="6" height="8" viewBox="0 0 6 8"><path d="M1,1 V7 L5,4Z" fill="#6a6660"/></svg>
<div class="a" style="left:74px;top:676px;width:1px;height:5px;background:#a8a49e;"></div>
<div class="a" style="left:77px;top:676px;width:1px;height:5px;background:#a8a49e;"></div>
<div class="a" style="left:80px;top:676px;width:1px;height:5px;background:#a8a49e;"></div>
<svg class="a" style="left:2px;top:684px" width="110" height="34" viewBox="0 0 110 34"><path d="M53,2.5 L43.5,28 Q42,31 38,31 H18 Q14,31 13,28 L3,2.5" fill="#ffffff" stroke="#404040" stroke-width="1.1"/><path d="M97.5,4 L89,28.5 Q88,30.5 84,30.5 H70 Q66,30.5 65,28.5 L53,4" fill="#f2f1f0" stroke="#404040" stroke-width="1.1"/></svg>
<div class="a" style="left:4px;top:685px;width:188px;height:1px;background:#f2f1f0;"></div>
<div class="t" style="left:13.00px;top:693.65px;font-size:14px;line-height:14px;letter-spacing:0.636px;color:#3c3c3c;">View</div>
<div class="t" style="left:62.00px;top:693.65px;font-size:14px;line-height:14px;letter-spacing:0.142px;color:#3c3c3c;">Data</div>
<div class="a" style="left:199px;top:112px;width:1104px;height:22px;background:#808080;"></div>
<div class="t" style="left:495.00px;top:115.34px;font-size:18.5px;line-height:18.5px;letter-spacing:0.308px;color:#ffffff;">Please, select at least one point in the left and the right view</div>
<div class="a" style="left:199px;top:134px;width:549px;height:551px;background:linear-gradient(#333366,#9999aa);"></div>
<div class="a" style="left:754px;top:134px;width:549px;height:551px;background:linear-gradient(#333366,#9999aa);"></div>
<div class="a" style="left:749px;top:406px;width:4px;height:1px;background:#b8b4ad;"></div>
<div class="a" style="left:749px;top:409px;width:4px;height:1px;background:#b8b4ad;"></div>
<div class="a" style="left:749px;top:412px;width:4px;height:1px;background:#b8b4ad;"></div>
<div class="a" style="left:194px;top:412px;width:4px;height:1px;background:#bdb9b2;"></div>
<div class="a" style="left:194px;top:415px;width:4px;height:1px;background:#bdb9b2;"></div>
<div class="a" style="left:194px;top:418px;width:4px;height:1px;background:#bdb9b2;"></div>
<svg class="a" style="left:0;top:0" width="1305" height="748"><polygon points="259,392.3 364.3,452.6 350.3,477.2 259.4,427" fill="#0b660b" stroke="#151515" stroke-width="1.7" stroke-linejoin="round"/><polygon points="578,309 580,342.6 533.9,420.7 525.3,400" fill="#0b3d0b" stroke="#151515" stroke-width="1.7" stroke-linejoin="round"/><polygon points="332.2,511 471.1,433.1 472.7,467.8 332.6,547" fill="#0b6e0b" stroke="#151515" stroke-width="1.7" stroke-linejoin="round"/><polygon points="471.1,433.1 555.3,477.2 557,511.3 472.7,467.8" fill="#0b6a0b" stroke="#151515" stroke-width="1.7" stroke-linejoin="round"/><polygon points="403.5,301.5 417.7,394.7 578,309 525.3,400 555.3,477.2 471.1,433.1 332.2,511 364.3,452.6 259,392.3 363.9,408" fill="#0b740b" stroke="#151515" stroke-width="1.7" stroke-linejoin="round"/><path d="M402.5,267 V284 M403,284 V301" stroke="#ff0000" stroke-width="1.2" fill="none"/><rect x="401" y="299" width="5" height="5" fill="#ff0000"/><path d="M577,275 V281 M578,281 V307" stroke="#00ff00" stroke-width="1.2" fill="none"/><rect x="576" y="306" width="5" height="5" fill="#00ff00"/><path d="M554,443 V459 M555,459 V476" stroke="#0000ff" stroke-width="1.2" fill="none"/><rect x="553" y="475" width="5" height="5" fill="#0000ff"/><polygon points="1003.8,208 959.2,313.4 829.4,486.3 917.1,276.3" fill="#300b0b" stroke="#151515" stroke-width="1.7" stroke-linejoin="round"/><polygon points="1178.9,251 1269,362.8 1179.2,572.4 1134.6,356.4" fill="#5b5b5b" stroke="#151515" stroke-width="1.7" stroke-linejoin="round"/><polygon points="1003.8,208 1178.9,251 1134.6,356.4 959.2,313.4" fill="#aaa50b" stroke="#151515" stroke-width="1.7" stroke-linejoin="round"/><polygon points="959.2,313.4 1134.6,356.4 1179.2,572.4 829.4,486.3" fill="#0baa0b" stroke="#151515" stroke-width="1.7" stroke-linejoin="round"/><rect x="957.5" y="311.5" width="4" height="3.5" fill="none" stroke="#00ff00" stroke-width="1.2"/><rect x="1132.5" y="354.5" width="4" height="4" fill="none" stroke="#ff0000" stroke-width="1.4"/><rect x="826.5" y="484.5" width="3.5" height="3.5" fill="none" stroke="#0000ff" stroke-width="1.2"/><path d="M835,461.5 H841 M836.5,461.5 V470 M834,470 H837 M836.5,465.5 H839" stroke="#0000ff" stroke-width="1.2" fill="none"/><path d="M720.7,657.7 L708.2,669.1" stroke="#8b1a1a" stroke-width="1.5"/><path d="M720.7,657.7 V641.5" stroke="#1a1a8b" stroke-width="2.2"/><path d="M718.5,647 L720.7,643 L722.9,647Z" fill="#1a1a8b"/><path d="M720.7,657.7 L737.1,665" stroke="#1a8b1a" stroke-width="1.6"/><path d="M732,661.5 L737.5,665.2 L731,665.5Z" fill="#1a8b1a"/><path d="M723,634.5 H728 L723,640.5 H728" stroke="#111" stroke-width="1.1" fill="none"/><path d="M710,664.5 L715,670.5 M715,664.5 L710,670.5" stroke="#111" stroke-width="1.1"/><path d="M741,659.5 L743.5,662.5 L746,659.5 M743.5,662.5 V666.5" stroke="#111" stroke-width="1.1" fill="none"/><path d="M1275.3,657.3 L1259.5,653.7" stroke="#8b1a1a" stroke-width="1.5"/><path d="M1275.3,657.3 L1278,641" stroke="#1a1a8b" stroke-width="2"/><path d="M1275.5,646 L1278.3,640.5 L1279.5,646.5Z" fill="#1a1a8b"/><path d="M1275.3,657.3 L1269.5,671" stroke="#1a8b1a" stroke-width="1.8"/><path d="M1268.5,664 L1269,671.5 L1273,666Z" fill="#1a8b1a"/><path d="M1281,633.5 H1286 L1281,639.5 H1286" stroke="#111" stroke-width="1.1" fill="none"/><path d="M1261,647.5 L1266,653.5 M1266,647.5 L1261,653.5" stroke="#111" stroke-width="1.1"/><path d="M1273,665.5 L1275.5,668.5 L1278,665.5 M1275.5,668.5 V672.5" stroke="#111" stroke-width="1.1" fill="none"/></svg>
<div class="t" style="left:402px;top:256.15px;font-family:'Liberation Serif',serif;font-size:14px;line-height:14px;letter-spacing:-0.124px;color:#ff0000">RegPoint_1</div>
<div class="t" style="left:577px;top:264.15px;font-family:'Liberation Serif',serif;font-size:14px;line-height:14px;letter-spacing:-0.124px;color:#00ff00">RegPoint_2</div>
<div class="t" style="left:554px;top:431.75px;font-family:'Liberation Serif',serif;font-size:14px;line-height:14px;letter-spacing:-0.124px;color:#0000ff">RegPoint_3</div>
<div class="t" style="left:966.6px;top:287.15px;font-family:'Liberation Serif',serif;font-size:14px;line-height:14px;letter-spacing:-0.124px;color:#00ff00">RegPoint_2</div>
<div class="t" style="left:1141.2px;top:330.15px;font-family:'Liberation Serif',serif;font-size:14px;line-height:14px;letter-spacing:-0.124px;color:#ff0000">RegPoint_1</div>
<div class="t" style="left:210.50px;top:637.94px;font-size:31.5px;line-height:31.5px;letter-spacing:1.009px;color:#d6d6da;-webkit-text-stroke:0.7px #9494a8">Movable object</div>
<div class="t" style="left:764.50px;top:637.94px;font-size:31.5px;line-height:31.5px;letter-spacing:0.742px;color:#d6d6da;-webkit-text-stroke:0.7px #9494a8">Fixed object</div>
<div class="a" style="left:199px;top:685px;width:196px;height:30px;background:linear-gradient(#f4f4f3,#e8e7e5 70%,#dddbd8);border:1px solid #bdb9b2;border-top:none;border-radius:0 0 4px 4px"></div>
<div class="a" style="left:395px;top:685px;width:136px;height:33px;background:#f7f7f6;border:1px solid #b6b2ab;border-top:none;border-radius:0 0 4px 4px"></div>
<svg class="a" style="left:206px;top:692px" width="18" height="18" viewBox="0 0 18 18"><rect x="1" y="1" width="8" height="13" fill="#e8381c"/><rect x="1" y="1" width="3" height="13" fill="#c02010"/><path d="M1,1 H9 V4 H4 V14 H1Z" fill="#f05020"/><g transform="translate(11,11)"><circle r="5" fill="#1a3cc8"/><path d="M0,-6.5 V6.5 M-6.5,0 H6.5 M-4.6,-4.6 L4.6,4.6 M4.6,-4.6 L-4.6,4.6" stroke="#1a3cc8" stroke-width="2.2"/><circle r="2" fill="#fff"/></g></svg>
<svg class="a" style="left:402px;top:692px" width="18" height="18" viewBox="0 0 18 18"><rect x="1" y="1" width="8" height="13" fill="#e8381c"/><rect x="1" y="1" width="3" height="13" fill="#c02010"/><path d="M1,1 H9 V4 H4 V14 H1Z" fill="#f05020"/><g transform="translate(11,11)"><circle r="5" fill="#1a3cc8"/><path d="M0,-6.5 V6.5 M-6.5,0 H6.5 M-4.6,-4.6 L4.6,4.6 M4.6,-4.6 L-4.6,4.6" stroke="#1a3cc8" stroke-width="2.2"/><circle r="2" fill="#fff"/></g></svg>
<div class="t" style="left:230.00px;top:695.15px;font-size:14px;line-height:14px;letter-spacing:0.401px;color:#3c3c3c;">T07-ejemplo-ini : 1*</div>
<div class="t" style="left:426.00px;top:695.65px;font-size:14px;line-height:14px;letter-spacing:0.843px;color:#3c3c3c;">Alignment</div>
<svg class="a" style="left:369px;top:694px" width="14" height="14" viewBox="0 0 14 14"><path d="M2.5,2.5 L11.5,11.5 M11.5,2.5 L2.5,11.5" stroke="#5e5e5e" stroke-width="3" stroke-linecap="round"/></svg>
<svg class="a" style="left:505px;top:695px" width="14" height="14" viewBox="0 0 14 14"><path d="M2.5,2.5 L11.5,11.5 M11.5,2.5 L2.5,11.5" stroke="#5e5e5e" stroke-width="3" stroke-linecap="round"/></svg>
<div class="a" style="left:2px;top:718px;width:1301px;height:1px;background:#d3d0cb;"></div>
<div class="a" style="left:2px;top:719px;width:1301px;height:1px;background:#faf9f8;"></div>
<div class="t" style="left:1155.20px;top:726.95px;font-size:14px;line-height:14px;letter-spacing:0.218px;color:#3c3c3c;">117.76 x 88.32 mm</div>
<svg class="a" style="left:1285px;top:730px" width="16" height="16" viewBox="0 0 16 16"><g fill="#c8c4be"><rect x="12" y="3" width="1.5" height="1.5"/><rect x="9" y="6" width="1.5" height="1.5"/><rect x="12" y="6" width="1.5" height="1.5"/><rect x="6" y="9" width="1.5" height="1.5"/><rect x="9" y="9" width="1.5" height="1.5"/><rect x="12" y="9" width="1.5" height="1.5"/><rect x="3" y="12" width="1.5" height="1.5"/><rect x="6" y="12" width="1.5" height="1.5"/><rect x="9" y="12" width="1.5" height="1.5"/><rect x="12" y="12" width="1.5" height="1.5"/></g></svg>
</body></html>
